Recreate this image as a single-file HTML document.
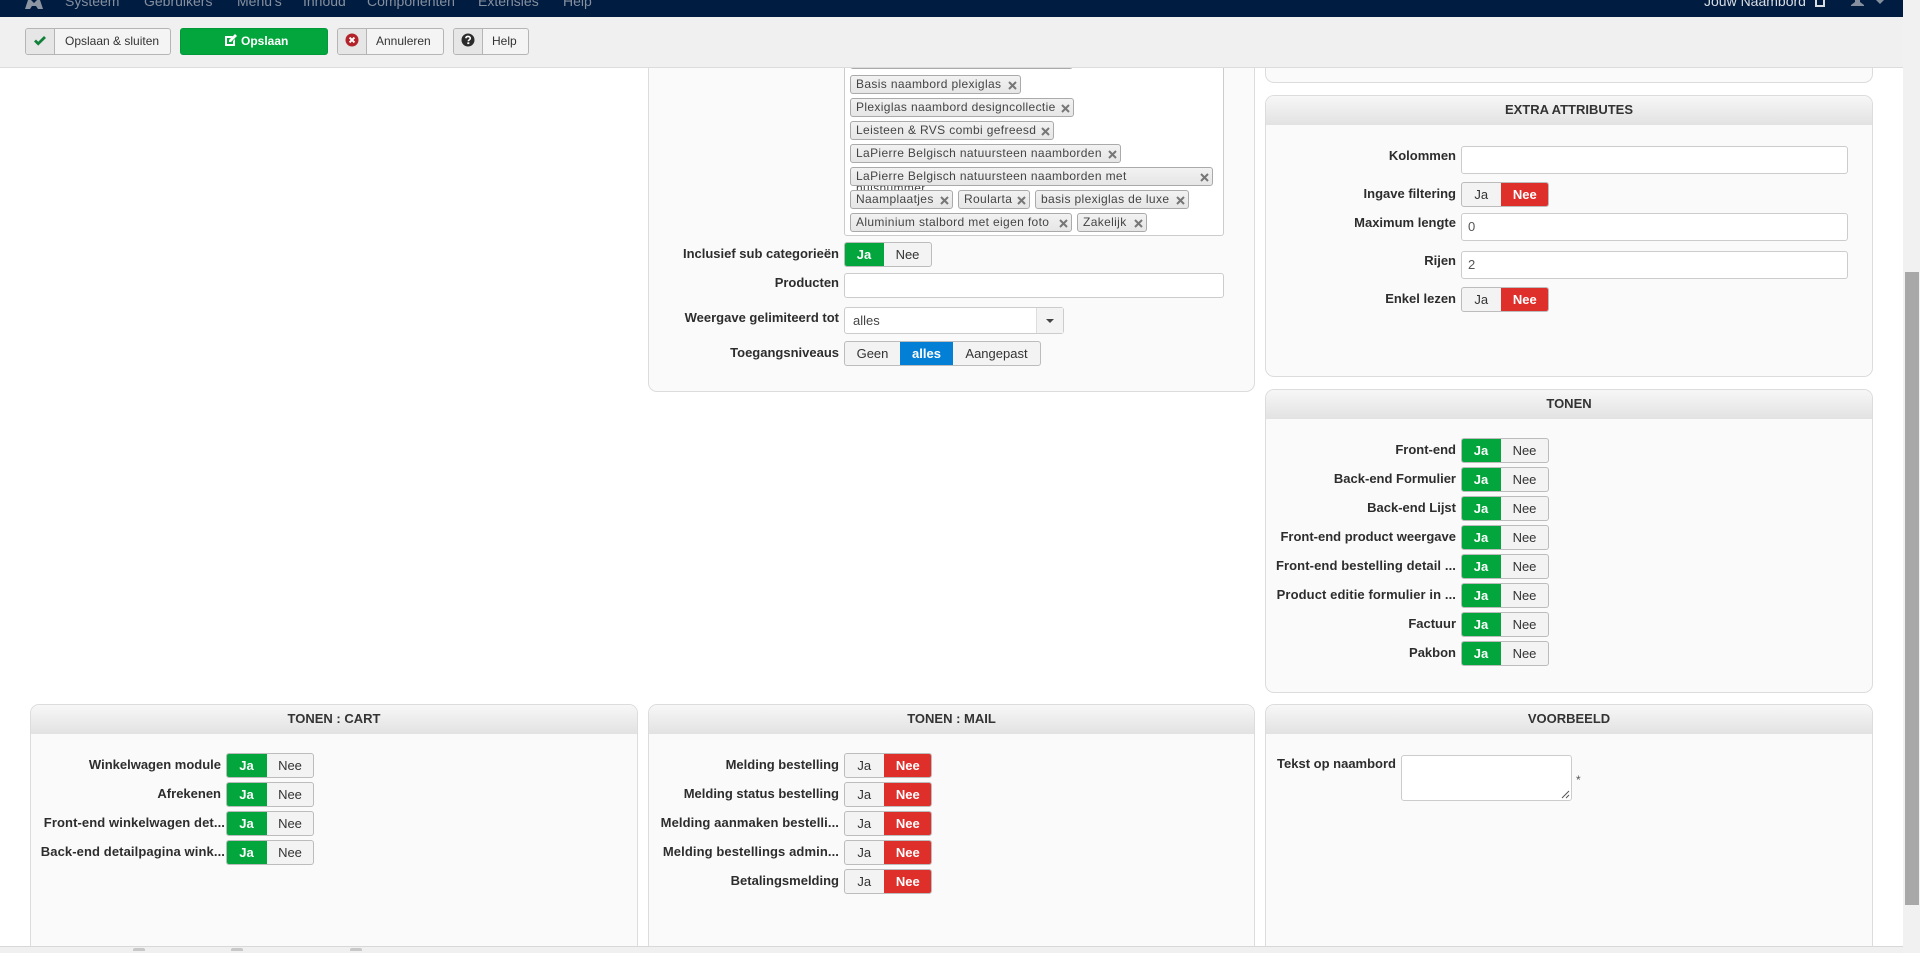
<!DOCTYPE html>
<html lang="nl"><head><meta charset="utf-8"><title>Opslaan</title>
<style>
*{box-sizing:border-box}
html,body{margin:0;padding:0;width:1920px;height:953px;overflow:hidden;background:#fff}
body{position:relative;font-family:"Liberation Sans",Arial,sans-serif;font-size:13px;color:#333}
.a{position:absolute}
#nav{left:0;top:0;width:1903px;height:17px;background:#001c41;overflow:hidden;z-index:8}
#nav span{position:absolute;top:-8px;font-size:14px;line-height:18px;color:#868f9e;white-space:nowrap}
#bar{left:0;top:17px;width:1903px;height:51px;background:#f0f0f0;border-bottom:1px solid #dcdcdc;z-index:5}
#foot{left:0;top:946px;width:1903px;height:7px;background:#f0f0f0;border-top:1px solid #d8d8d8;z-index:5}
#foot i{position:absolute;top:1px;width:12px;height:3px;background:#c8c8c8;border-radius:2px 2px 0 0}
#track{left:1903px;top:0;width:17px;height:953px;background:#f1f1f1;z-index:6}
#thumb{left:1905px;top:272px;width:14px;height:633px;background:#a8a8a8;z-index:7}
.btn{position:absolute;top:28px;height:27px;border:1px solid #b5b5b5;border-radius:3px;background:#f4f4f4;font-size:12px;line-height:25px;color:#333;z-index:6;white-space:nowrap}
.btn .ic{position:absolute;left:0;top:0;width:29px;height:25px;background:#e6e6e6;border-right:1px solid #b5b5b5;border-radius:2px 0 0 2px}
.btn .ic svg{position:absolute;left:7px;top:4px}
.btn b{position:absolute;font-weight:normal}
.p{position:absolute;background:#fafafa;border:1px solid #dcdcdc;border-radius:9px;overflow:hidden}
.h{height:29px;background:linear-gradient(#f7f7f7,#e2e2e2);text-align:center;font-weight:bold;font-size:13px;line-height:27px;color:#333;margin:0 -1px;padding:0 1px}
.l{position:absolute;height:18px;line-height:18px;margin-top:1px;text-align:right;font-weight:bold;font-size:13px;color:#2d2d2d;white-space:nowrap}
.c1{left:30px;width:191px}.c2{left:648px;width:191px}.c3{left:1265px;width:191px}
.tr{letter-spacing:.1px}
.c1.tr{width:195px}
.t{position:absolute;height:25px;display:flex;border:1px solid #bcbcbc;border-radius:3px;background:#f3f3f3;font-size:13px;line-height:23px;text-align:center;color:#333;overflow:hidden}
.t span{display:block}
.g{background:#03a63d;color:#fff;font-weight:bold;margin:-1px 0}
.r{background:#df2f2b;color:#fff;font-weight:bold;margin:-1px -1px -1px 0;line-height:25px}
.g{line-height:25px;margin-left:-1px}
.bl{background:#0380d6;color:#fff;font-weight:bold;margin:-1px 0;line-height:25px}
.inp{position:absolute;background:#fff;border:1px solid #ccc;border-radius:3px;font-size:13px;line-height:26px;padding-left:6px;color:#555}
.tag{position:absolute;height:19px;background:linear-gradient(#f2f2f2,#e6e6e6);border:1px solid #aaa;border-radius:3px;font-size:12px;line-height:16px;padding-left:5px;color:#444;white-space:nowrap;letter-spacing:.36px;overflow:hidden}
.tag svg{position:absolute;right:3px;top:5px}
</style></head><body>

<div class="a" id="nav">
<svg class="a" style="left:25px;top:0" width="18" height="9" viewBox="0 0 18 9"><path d="M3 0h3l3 3 3-3h3l3 9h-5l-2-3H7L5 9H0z" fill="#8d95a3"/></svg>
<span style="left:65px">Systeem</span><span style="left:144px">Gebruikers</span><span style="left:237px">Menu's</span><span style="left:303px">Inhoud</span><span style="left:367px">Componenten</span><span style="left:478px">Extensies</span><span style="left:563px">Help</span>
<span style="left:1704px;color:#d9dde3">Jouw Naambord</span>
<svg class="a" style="left:1815px;top:0" width="11" height="7" viewBox="0 0 11 7"><path d="M1 0v6h8V0" fill="none" stroke="#d9dde3" stroke-width="2"/></svg>
<svg class="a" style="left:1851px;top:0" width="13" height="6" viewBox="0 0 13 6"><path d="M4 0h5v2l4 3v1H0V5l4-3z" fill="#868f9e"/></svg>
<svg class="a" style="left:1876px;top:0" width="8" height="4" viewBox="0 0 8 4"><path d="M0 0h8L4 4z" fill="#868f9e"/></svg>
</div>

<div class="a" id="bar"></div>
<div class="btn" style="left:25px;width:146px"><div class="ic"><svg width="14" height="14" viewBox="0 0 14 14"><path d="M2 7.5l3.2 3.2L12 4" fill="none" stroke="#11803a" stroke-width="2.8"/></svg></div><b style="left:39px">Opslaan &amp; sluiten</b></div>
<div class="btn" style="left:180px;width:148px;background:#03a63d;border-color:#03983a;color:#fff;font-weight:bold"><svg class="a" style="left:43px;top:5px" width="13" height="13" viewBox="0 0 13 13"><path d="M1 2h8L7 4H3v6h6V7l2-2v7H1z" fill="#fff"/><path d="M5 6l6-6 2 2-6 6H5z" fill="#fff"/></svg><b style="left:60px;font-weight:bold">Opslaan</b></div>
<div class="btn" style="left:337px;width:107px"><div class="ic"><svg width="14" height="14" viewBox="0 0 14 14"><circle cx="7" cy="7" r="6.5" fill="#b3232a"/><path d="M4.6 4.6l4.8 4.8M9.4 4.6L4.6 9.4" stroke="#fff" stroke-width="2"/></svg></div><b style="left:38px">Annuleren</b></div>
<div class="btn" style="left:453px;width:76px"><div class="ic"><svg width="14" height="14" viewBox="0 0 14 14"><circle cx="7" cy="7" r="6.5" fill="#2b2b2b"/><path d="M4.8 5.3C5 3.9 6 3.4 7 3.4c1.3 0 2.3.8 2.3 1.9 0 1.6-2 1.6-2 3" fill="none" stroke="#fff" stroke-width="1.6"/><rect x="6.3" y="9.3" width="2" height="1.8" fill="#fff"/></svg></div><b style="left:38px">Help</b></div>

<!-- col 2 top panel -->
<div class="p" style="left:648px;top:-20px;width:607px;height:412px"></div>
<div class="a" style="left:844px;top:50px;width:380px;height:186px;background:#fff;border:1px solid #ccc;border-radius:3px"></div>
<div class="tag" style="left:850px;top:50px;width:223px"></div>
<div class="tag" style="left:850px;top:75px;width:171px">Basis naambord plexiglas<svg width="9" height="9" viewBox="0 0 9 9"><path d="M1 1l7 7M8 1L1 8" stroke="#777" stroke-width="2"/></svg></div>
<div class="tag" style="left:850px;top:98px;width:224px">Plexiglas naambord designcollectie<svg width="9" height="9" viewBox="0 0 9 9"><path d="M1 1l7 7M8 1L1 8" stroke="#777" stroke-width="2"/></svg></div>
<div class="tag" style="left:850px;top:121px;width:204px">Leisteen &amp; RVS combi gefreesd<svg width="9" height="9" viewBox="0 0 9 9"><path d="M1 1l7 7M8 1L1 8" stroke="#777" stroke-width="2"/></svg></div>
<div class="tag" style="left:850px;top:144px;width:271px">LaPierre Belgisch natuursteen naamborden<svg width="9" height="9" viewBox="0 0 9 9"><path d="M1 1l7 7M8 1L1 8" stroke="#777" stroke-width="2"/></svg></div>
<div class="tag" style="left:850px;top:167px;width:363px;height:19px">LaPierre Belgisch natuursteen naamborden met<svg width="9" height="9" viewBox="0 0 9 9"><path d="M1 1l7 7M8 1L1 8" stroke="#777" stroke-width="2"/></svg></div>
<div class="a" style="left:856px;top:186px;height:4px;overflow:hidden;font-size:12px;line-height:4px;color:#444;letter-spacing:.36px">huisnummer</div>
<div class="tag" style="left:850px;top:190px;width:103px">Naamplaatjes<svg width="9" height="9" viewBox="0 0 9 9"><path d="M1 1l7 7M8 1L1 8" stroke="#777" stroke-width="2"/></svg></div>
<div class="tag" style="left:958px;top:190px;width:72px">Roularta<svg width="9" height="9" viewBox="0 0 9 9"><path d="M1 1l7 7M8 1L1 8" stroke="#777" stroke-width="2"/></svg></div>
<div class="tag" style="left:1035px;top:190px;width:154px">basis plexiglas de luxe<svg width="9" height="9" viewBox="0 0 9 9"><path d="M1 1l7 7M8 1L1 8" stroke="#777" stroke-width="2"/></svg></div>
<div class="tag" style="left:850px;top:213px;width:222px">Aluminium stalbord met eigen foto<svg width="9" height="9" viewBox="0 0 9 9"><path d="M1 1l7 7M8 1L1 8" stroke="#777" stroke-width="2"/></svg></div>
<div class="tag" style="left:1077px;top:213px;width:70px">Zakelijk<svg width="9" height="9" viewBox="0 0 9 9"><path d="M1 1l7 7M8 1L1 8" stroke="#777" stroke-width="2"/></svg></div>

<div class="l c2" style="top:244px">Inclusief sub categorieën</div>
<div class="t" style="left:844px;top:242px;width:88px"><span class="g" style="width:40px">Ja</span><span style="width:47px">Nee</span></div>
<div class="l c2" style="top:273px">Producten</div>
<div class="inp" style="left:844px;top:273px;width:380px;height:25px"></div>
<div class="l c2" style="top:308px">Weergave gelimiteerd tot</div>
<div class="inp" style="left:844px;top:307px;width:220px;height:27px;padding-left:8px;color:#444">alles<div class="a" style="left:191px;top:0;width:27px;height:25px;background:#f3f3f3;border-left:1px solid #ddd"><div class="a" style="left:9px;top:11px;border:4px solid transparent;border-top:4px solid #444;border-bottom:0"></div></div></div>
<div class="l c2" style="top:343px">Toegangsniveaus</div>
<div class="t" style="left:844px;top:341px;width:197px"><span style="width:55px">Geen</span><span class="bl" style="width:53px">alles</span><span style="width:87px">Aangepast</span></div>

<!-- col 3 -->
<div class="p" style="left:1265px;top:-20px;width:608px;height:103px"></div>

<div class="p" style="left:1265px;top:95px;width:608px;height:282px"><div class="h">EXTRA ATTRIBUTES</div></div>
<div class="l c3" style="top:146px">Kolommen</div>
<div class="inp" style="left:1461px;top:146px;width:387px;height:28px"></div>
<div class="l c3" style="top:184px">Ingave filtering</div>
<div class="t" style="left:1461px;top:182px;width:88px"><span style="width:39px">Ja</span><span class="r" style="width:49px">Nee</span></div>
<div class="l c3" style="top:213px">Maximum lengte</div>
<div class="inp" style="left:1461px;top:213px;width:387px;height:28px">0</div>
<div class="l c3" style="top:251px">Rijen</div>
<div class="inp" style="left:1461px;top:251px;width:387px;height:28px">2</div>
<div class="l c3" style="top:289px">Enkel lezen</div>
<div class="t" style="left:1461px;top:287px;width:88px"><span style="width:39px">Ja</span><span class="r" style="width:49px">Nee</span></div>

<div class="p" style="left:1265px;top:389px;width:608px;height:304px"><div class="h">TONEN</div></div>
<div class="l c3" style="top:440px">Front-end</div><div class="t" style="left:1461px;top:438px;width:88px"><span class="g" style="width:40px">Ja</span><span style="width:47px">Nee</span></div>
<div class="l c3" style="top:469px">Back-end Formulier</div><div class="t" style="left:1461px;top:467px;width:88px"><span class="g" style="width:40px">Ja</span><span style="width:47px">Nee</span></div>
<div class="l c3" style="top:498px">Back-end Lijst</div><div class="t" style="left:1461px;top:496px;width:88px"><span class="g" style="width:40px">Ja</span><span style="width:47px">Nee</span></div>
<div class="l c3" style="top:527px">Front-end product weergave</div><div class="t" style="left:1461px;top:525px;width:88px"><span class="g" style="width:40px">Ja</span><span style="width:47px">Nee</span></div>
<div class="l c3 tr" style="top:556px">Front-end bestelling detail ...</div><div class="t" style="left:1461px;top:554px;width:88px"><span class="g" style="width:40px">Ja</span><span style="width:47px">Nee</span></div>
<div class="l c3 tr" style="top:585px">Product editie formulier in ...</div><div class="t" style="left:1461px;top:583px;width:88px"><span class="g" style="width:40px">Ja</span><span style="width:47px">Nee</span></div>
<div class="l c3" style="top:614px">Factuur</div><div class="t" style="left:1461px;top:612px;width:88px"><span class="g" style="width:40px">Ja</span><span style="width:47px">Nee</span></div>
<div class="l c3" style="top:643px">Pakbon</div><div class="t" style="left:1461px;top:641px;width:88px"><span class="g" style="width:40px">Ja</span><span style="width:47px">Nee</span></div>

<!-- bottom row -->
<div class="p" style="left:30px;top:704px;width:608px;height:280px"><div class="h">TONEN : CART</div></div>
<div class="l c1" style="top:755px">Winkelwagen module</div><div class="t" style="left:226px;top:753px;width:88px"><span class="g" style="width:41px">Ja</span><span style="width:46px">Nee</span></div>
<div class="l c1" style="top:784px">Afrekenen</div><div class="t" style="left:226px;top:782px;width:88px"><span class="g" style="width:41px">Ja</span><span style="width:46px">Nee</span></div>
<div class="l c1 tr" style="top:813px">Front-end winkelwagen det...</div><div class="t" style="left:226px;top:811px;width:88px"><span class="g" style="width:41px">Ja</span><span style="width:46px">Nee</span></div>
<div class="l c1 tr" style="top:842px">Back-end detailpagina wink...</div><div class="t" style="left:226px;top:840px;width:88px"><span class="g" style="width:41px">Ja</span><span style="width:46px">Nee</span></div>

<div class="p" style="left:648px;top:704px;width:607px;height:280px"><div class="h">TONEN : MAIL</div></div>
<div class="l c2" style="top:755px">Melding bestelling</div><div class="t" style="left:844px;top:753px;width:88px"><span style="width:39px">Ja</span><span class="r" style="width:49px">Nee</span></div>
<div class="l c2" style="top:784px">Melding status bestelling</div><div class="t" style="left:844px;top:782px;width:88px"><span style="width:39px">Ja</span><span class="r" style="width:49px">Nee</span></div>
<div class="l c2 tr" style="top:813px">Melding aanmaken bestelli...</div><div class="t" style="left:844px;top:811px;width:88px"><span style="width:39px">Ja</span><span class="r" style="width:49px">Nee</span></div>
<div class="l c2 tr" style="top:842px">Melding bestellings admin...</div><div class="t" style="left:844px;top:840px;width:88px"><span style="width:39px">Ja</span><span class="r" style="width:49px">Nee</span></div>
<div class="l c2" style="top:871px">Betalingsmelding</div><div class="t" style="left:844px;top:869px;width:88px"><span style="width:39px">Ja</span><span class="r" style="width:49px">Nee</span></div>

<div class="p" style="left:1265px;top:704px;width:608px;height:280px"><div class="h">VOORBEELD</div></div>
<div class="l" style="left:1270px;width:126px;top:754px">Tekst op naambord</div>
<div class="inp" style="left:1401px;top:755px;width:171px;height:46px"><svg class="a" style="right:1px;bottom:1px" width="9" height="9" viewBox="0 0 9 9"><path d="M1 8l7-7M5 8l3-3" stroke="#555" stroke-width="1"/></svg></div>
<div class="a" style="left:1576px;top:773px;font-size:12px;line-height:14px;color:#555">*</div>

<div class="a" id="foot"><i style="left:133px"></i><i style="left:231px"></i><i style="left:350px"></i></div>
<div class="a" id="track"></div>
<div class="a" id="thumb"></div>
</body></html>
